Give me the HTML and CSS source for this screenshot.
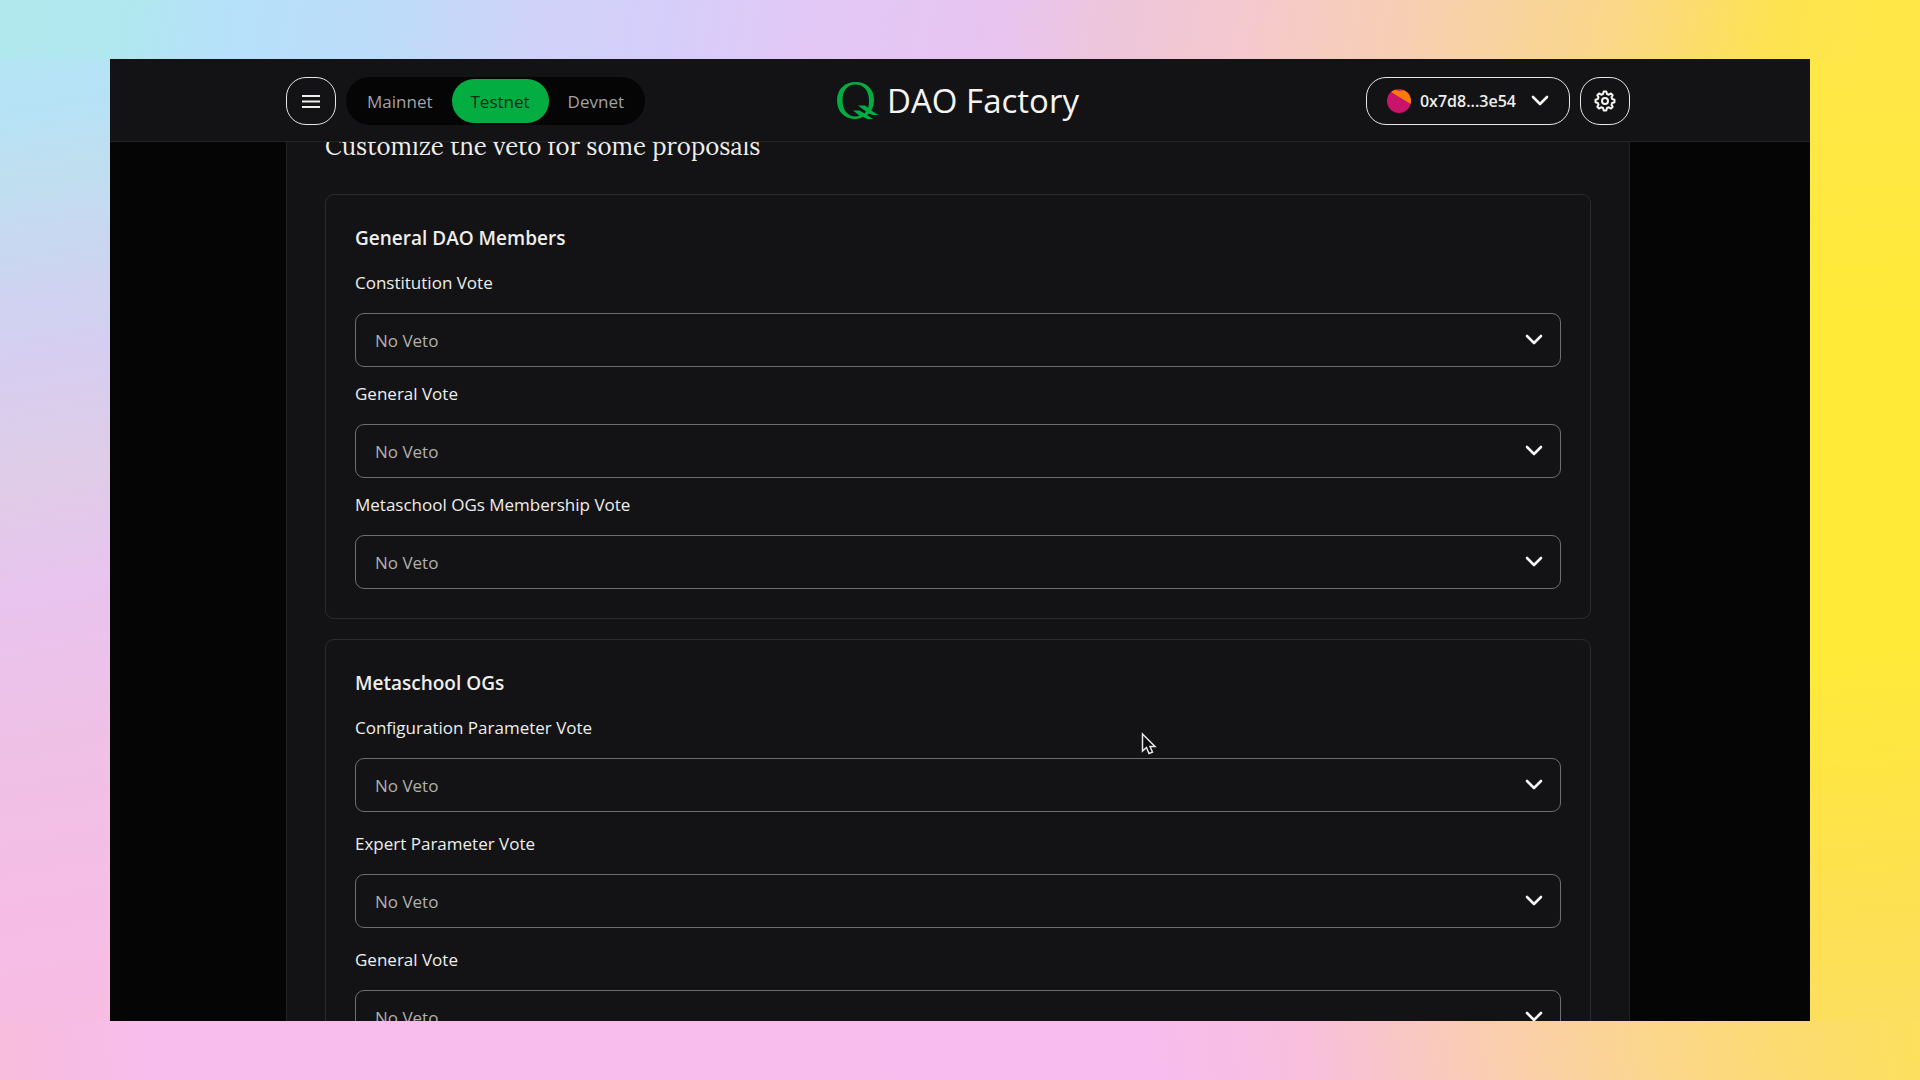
FILE: index.html
```html
<!DOCTYPE html>
<html lang="en">
<head>
<meta charset="utf-8">
<title>DAO Factory</title>
<link rel="stylesheet" href="styles.css">
</head>
<body>
<div class="backdrop">
<div class="window">
  <header class="topbar">
    <div class="topbar-inner">
      <div class="topbar-left">
        <button class="icon-button" type="button" aria-label="Menu">
          <svg width="18" height="13" viewBox="0 0 18 13" fill="#eeeeea"><path d="M0 0h18v2H0zM0 5.500h18v2H0zM0 11h18v2H0z"/></svg>
        </button>
        <nav class="networks" aria-label="Network">
          <button class="network" type="button">Mainnet</button>
          <button class="network active" type="button">Testnet</button>
          <button class="network" type="button">Devnet</button>
        </nav>
      </div>
      <a class="brand" href="#">
        <svg class="brand-mark" width="42" height="40" viewBox="0 0 42 40" fill="none" aria-hidden="true">
          <path fill="#04ad42" fill-rule="evenodd" d="M18.500 1C29.500 1 37 8 37 19c0 4-1 7.500-2.700 10.500L41.500 34h-6l-3.500-1.500-2 1.500 6 4h-6l-4-2.200C23.500 37.500 21 38 18.500 38 8 38 0 31 0 19.500S8 1 18.500 1zM18.500 3.500C10.500 3.500 5.500 9.500 5.500 19.500S11 35.500 18.500 35.500c1.500 0 2.700-.2 4-.7L16 29.500h6.500l5 3 1.500-2-8-6h7l3.200 2.200c.5-2 .8-4.400.8-7.200C32 9.500 26.500 3.500 18.500 3.500z"/>
        </svg>
        <span>DAO Factory</span>
      </a>
      <div class="topbar-right">
        <button class="account" type="button">
          <svg width="24" height="24" viewBox="0 0 24 24" aria-hidden="true"><circle cx="12" cy="12" r="12" fill="#c8146b"/><path fill="#fa7a08" d="M4 3.100A12 12 0 0 1 8 .7L12 2l5-.8A12 12 0 0 1 23.700 15z"/></svg>
          <span>0x7d8...3e54</span>
          <svg class="chevron" width="18" height="12" viewBox="0 0 18 12" fill="none" stroke="#f4f4f2" stroke-width="2.600" stroke-linecap="round" stroke-linejoin="round"><path d="M2 2l7 7 7-7"/></svg>
        </button>
        <button class="icon-button" type="button" aria-label="Settings">
          <svg width="24" height="24" viewBox="0 0 24 24" fill="none" stroke="#f4f4f2" stroke-width="2"><path stroke-linejoin="round" d="M10 5l.7-2.500h2.600L14 5l1.800.7L18 4.500 19.700 6.200 18.500 8.300l.7 1.700 2.300.7v2.600l-2.300.7-.7 1.700 1.200 2.100-1.700 1.700-2.200-1.200L14 19l-.7 2.500h-2.600L10 19l-1.800-.7L6 19.500 4.300 17.800l1.200-2.100-.7-1.700-2.300-.7v-2.600l2.300-.7.7-1.700L4.300 6.200 6 4.500l2.200 1.200z"/><circle cx="12" cy="12" r="3"/></svg>
        </button>
      </div>
    </div>
  </header>
  <main class="page">
    <h1 class="page-title">Customize the veto for some proposals</h1>
    <section class="card">
      <h2 class="card-title">General DAO Members</h2>
      <div class="fields">
        <div class="field"><label for="a1">Constitution Vote</label><select id="a1"><option>No Veto</option></select></div>
        <div class="field"><label for="a2">General Vote</label><select id="a2"><option>No Veto</option></select></div>
        <div class="field"><label for="a3">Metaschool OGs Membership Vote</label><select id="a3"><option>No Veto</option></select></div>
      </div>
    </section>
    <section class="card">
      <h2 class="card-title">Metaschool OGs</h2>
      <div class="fields roomy">
        <div class="field"><label for="b1">Configuration Parameter Vote</label><select id="b1"><option>No Veto</option></select></div>
        <div class="field"><label for="b2">Expert Parameter Vote</label><select id="b2"><option>No Veto</option></select></div>
        <div class="field"><label for="b3">General Vote</label><select id="b3"><option>No Veto</option></select></div>
      </div>
    </section>
  </main>
</div>
<svg class="cursor" width="16" height="24" viewBox="0 0 16 24" aria-hidden="true"><path d="M1.500 2v17l4-3.500 2.500 6 3.500-1.500-2.500-5.500h5z" fill="#0b0b0c" stroke="#e8e8e8" stroke-width="1.500"/></svg>
</div>
</body>
</html>
```
FILE: styles.css
```css
* { box-sizing: border-box; }

body {
  margin: 0;
  font-family: "Open Sans", "Noto Sans", sans-serif;
  color: #eeeeec;
}

.backdrop {
  position: relative;
  height: 100vh;
  padding: 59px 110px;
  overflow: hidden;
  background:
    linear-gradient(100deg, #b0e8ee 0%, #b0e7ef 7%, #b6e0fa 12%, #bcdcfa 20%, #d0d2fa 28%, #d6cefa 35%, #e2c8f6 42%, #e8c4f0 52%, #eec6da 58%, #f4c8d0 64%, #f7ceb2 73%, #fad888 84%, #fee252 92%, #ffe748 97%) top / 100% 59px no-repeat,
    linear-gradient(80deg, #f8bcdc 0%, #f8bdec 8%, #f8bcee 60%, #f9bfdc 68%, #f9cdb2 77%, #fbd78c 86%, #fcdc70 93%, #fde05c 100%) bottom / 100% 59px no-repeat,
    linear-gradient(170deg, #b0e8f0 0%, #b6e2f6 10%, #bedff0 16%, #cad6f0 24%, #d6cef0 33%, #dfcce8 44%, #e8c4ee 54%, #f0c0e6 70%, #f6bde6 86%, #f8bcdf 100%) left / 110px 100% no-repeat,
    linear-gradient(175deg, #ffe64c 0%, #ffea38 30%, #ffea38 60%, #fee150 82%, #fcde66 100%) right / 110px 100% no-repeat;
}

.window {
  height: 100%;
  overflow: hidden;
  background: #050506;
}

.topbar {
  position: relative;
  height: 83px;
  padding-top: 2px;
  background: #131315;
  border-bottom: 1px solid #232325;
}

.topbar-inner,
.page {
  margin: 0 180px 0 176px;
}

.topbar-inner {
  height: 100%;
  display: grid;
  grid-template-columns: 1fr auto 1fr;
  align-items: center;
}

.topbar-left,
.topbar-right {
  display: flex;
  align-items: center;
  gap: 10px;
}

.topbar-right { justify-content: flex-end; }

button {
  font: inherit;
  color: inherit;
  border: 0;
  background: none;
  padding: 0;
}

.icon-button,
.account {
  height: 48px;
  border: 1px solid #e6e6e4;
  border-radius: 20px;
  display: flex;
  align-items: center;
  justify-content: center;
}

.icon-button { width: 50px; }

.account {
  padding: 0 20px;
  gap: 9px;
  font-size: 16px;
  font-weight: 600;
}

.account .chevron { margin-left: 6px; }

.networks {
  display: flex;
  height: 48px;
  padding: 2px;
  border-radius: 24px;
  background: #050506;
}

.network {
  padding: 0 19px;
  border-radius: 22px;
  font-size: 17px;
  color: #a2a2a4;
}

.network.active {
  background: #04ad42;
  color: #0b2814;
  font-weight: 500;
}

.brand {
  display: flex;
  align-items: center;
  gap: 8px;
  font-size: 33px;
  line-height: 40px;
  color: #f4f4f2;
  text-decoration: none;
}

.page {
  display: flex;
  flex-direction: column;
  gap: 20px;
  min-height: 100%;
  margin-top: -13px;
  padding: 0 38px;
  background: #131315;
  border: solid #232325;
  border-width: 0 1px;
}

.page-title {
  margin: 0 0 9px;
  font: 400 24px/36px Lora, "Liberation Serif", serif;
}

.card {
  padding: 28px 29px 29px;
  border: 1px solid #2b2b2d;
  border-radius: 9px;
}

.card-title {
  margin: 0 0 18px;
  font-size: 19px;
  line-height: 30px;
  font-weight: 600;
}

.fields {
  display: grid;
  gap: 15px;
}

.fields.roomy { gap: 20px; }

.field {
  display: grid;
  gap: 18px;
}

.field label {
  font-size: 17px;
  line-height: 24px;
}

select {
  appearance: none;
  width: 100%;
  height: 54px;
  padding: 0 19px;
  border: 1px solid #6e6e70;
  border-radius: 9px;
  font: inherit;
  font-size: 17px;
  color: #b0b0b0;
  background: url("data:image/svg+xml,%3Csvg xmlns='http://www.w3.org/2000/svg' width='18' height='12' fill='none' stroke='%23f4f4f2' stroke-width='2.600' stroke-linecap='round' stroke-linejoin='round'%3E%3Cpath d='M2 2l7 7 7-7'/%3E%3C/svg%3E") right 17px center no-repeat;
}

.cursor {
  position: absolute;
  left: 1141px;
  top: 732px;
}
```
